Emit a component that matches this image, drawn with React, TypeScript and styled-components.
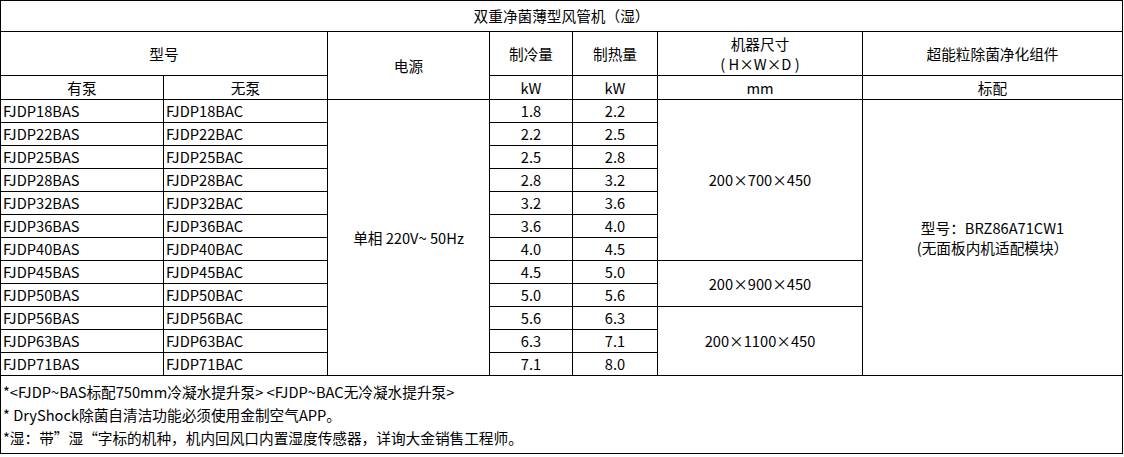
import { FC } from 'react';
import styled, { createGlobalStyle } from 'styled-components';

const GlobalStyle = createGlobalStyle`
	html, body {
		margin: 0;
		padding: 0;
		background: #fff;
	}
	body {
		font-family: 'Noto Sans CJK SC', 'Noto Sans', sans-serif;
		color: #000;
	}
`;

const SpecTable = styled.table`
	width: 1123px;
	table-layout: fixed;
	border-collapse: collapse;
	font-size: 11pt;
	line-height: 20px;
`;

const Row = styled.tr<{ $h: number }>`
	height: ${p => p.$h}px;
`;

const Cell = styled.td<{ $align?: 'left' | 'center' }>`
	border: 1px solid #000;
	padding: 0 ${p => (p.$align === 'left' ? '2px' : '0')};
	text-align: ${p => p.$align || 'center'};
	vertical-align: middle;
	white-space: nowrap;
	overflow: hidden;
`;

const NoteCell = styled.td`
	border: 1px solid #000;
	padding: 0 2px;
	text-align: left;
	vertical-align: middle;
	line-height: 23px;
`;

const NoteLine = styled.div`
	white-space: nowrap;
`;

interface Model {
	pump: string;
	noPump: string;
	cool: string;
	heat: string;
}

const models: Model[] = [
	{ pump: 'FJDP18BAS', noPump: 'FJDP18BAC', cool: '1.8', heat: '2.2' },
	{ pump: 'FJDP22BAS', noPump: 'FJDP22BAC', cool: '2.2', heat: '2.5' },
	{ pump: 'FJDP25BAS', noPump: 'FJDP25BAC', cool: '2.5', heat: '2.8' },
	{ pump: 'FJDP28BAS', noPump: 'FJDP28BAC', cool: '2.8', heat: '3.2' },
	{ pump: 'FJDP32BAS', noPump: 'FJDP32BAC', cool: '3.2', heat: '3.6' },
	{ pump: 'FJDP36BAS', noPump: 'FJDP36BAC', cool: '3.6', heat: '4.0' },
	{ pump: 'FJDP40BAS', noPump: 'FJDP40BAC', cool: '4.0', heat: '4.5' },
	{ pump: 'FJDP45BAS', noPump: 'FJDP45BAC', cool: '4.5', heat: '5.0' },
	{ pump: 'FJDP50BAS', noPump: 'FJDP50BAC', cool: '5.0', heat: '5.6' },
	{ pump: 'FJDP56BAS', noPump: 'FJDP56BAC', cool: '5.6', heat: '6.3' },
	{ pump: 'FJDP63BAS', noPump: 'FJDP63BAC', cool: '6.3', heat: '7.1' },
	{ pump: 'FJDP71BAS', noPump: 'FJDP71BAC', cool: '7.1', heat: '8.0' },
];

// row index where a size group starts -> [rowSpan, label]
const sizeGroups: Record<number, [number, string]> = {
	0: [7, '200×700×450'],
	7: [2, '200×900×450'],
	9: [3, '200×1100×450'],
};

const colWidths = [163, 164, 162, 83, 85, 205, 260];

const App: FC = () => {
	return (
		<>
			<GlobalStyle />
			<SpecTable>
				<colgroup>
					{colWidths.map((w, i) => (
						<col key={i} style={{ width: w }} />
					))}
				</colgroup>
				<tbody>
					<Row $h={31}>
						<Cell colSpan={7}>双重净菌薄型风管机（湿）</Cell>
					</Row>
					<Row $h={44}>
						<Cell colSpan={2}>型号</Cell>
						<Cell rowSpan={2}>电源</Cell>
						<Cell>制冷量</Cell>
						<Cell>制热量</Cell>
						<Cell>
							机器尺寸
							<br />( H×W×D )
						</Cell>
						<Cell>超能粒除菌净化组件</Cell>
					</Row>
					<Row $h={24}>
						<Cell>有泵</Cell>
						<Cell>无泵</Cell>
						<Cell>kW</Cell>
						<Cell>kW</Cell>
						<Cell>mm</Cell>
						<Cell>标配</Cell>
					</Row>
					{models.map((m, i) => (
						<Row $h={23} key={m.pump}>
							<Cell $align="left">{m.pump}</Cell>
							<Cell $align="left">{m.noPump}</Cell>
							{i === 0 && <Cell rowSpan={models.length}>单相 220V~ 50Hz</Cell>}
							<Cell>{m.cool}</Cell>
							<Cell>{m.heat}</Cell>
							{sizeGroups[i] && (
								<Cell rowSpan={sizeGroups[i][0]}>{sizeGroups[i][1]}</Cell>
							)}
							{i === 0 && (
								<Cell rowSpan={models.length}>
									型号：BRZ86A71CW1
									<br />
									(无面板内机适配模块）
								</Cell>
							)}
						</Row>
					))}
					<Row $h={78}>
						<NoteCell colSpan={7}>
							<NoteLine>*&lt;FJDP~BAS标配750mm冷凝水提升泵&gt; &lt;FJDP~BAC无冷凝水提升泵&gt;</NoteLine>
							<NoteLine>* DryShock除菌自清洁功能必须使用金制空气APP。</NoteLine>
							<NoteLine>*湿：带”湿“字标的机种，机内回风口内置湿度传感器，详询大金销售工程师。</NoteLine>
						</NoteCell>
					</Row>
				</tbody>
			</SpecTable>
		</>
	);
};

export default App;
